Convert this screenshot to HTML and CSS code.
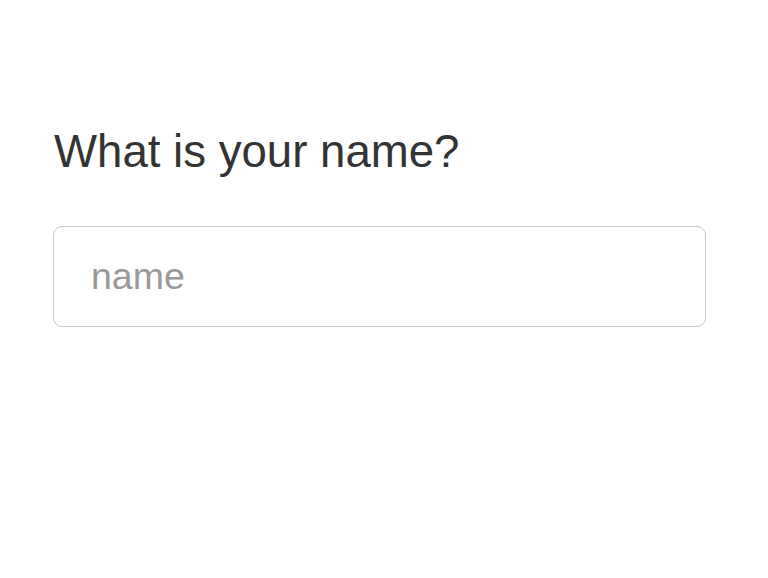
FILE: index.html
```html
<!DOCTYPE html>
<html lang="en">
<head>
<meta charset="utf-8">
<title>Name</title>
<link rel="stylesheet" href="styles.css">
</head>
<body>
<main class="page">
  <form class="question">
    <label class="question-label" for="name">What is your name?</label>
    <input class="question-input" id="name" type="text" placeholder="name">
  </form>
</main>
</body>
</html>
```
FILE: styles.css
```css
html, body {
  margin: 0;
  padding: 0;
  background: #ffffff;
}
body {
  font-family: "Liberation Sans", Arial, sans-serif;
  color: #333333;
}
.page {
  padding: 125px 62px 0 53px;
}
.question {
  display: flex;
  flex-direction: column;
  gap: 47px;
  margin: 0;
}
.question-label {
  display: block;
  font-size: 45.6px;
  line-height: 54px;
  padding-left: 1px;
}
.question-input {
  box-sizing: border-box;
  width: 653px;
  height: 101px;
  margin: 0;
  padding: 0 37px;
  border: 1px solid #c8c8c8;
  border-radius: 9px;
  font-family: "Liberation Sans", Arial, sans-serif;
  font-size: 37.5px;
  color: #333333;
  background: #ffffff;
  outline: none;
}
.question-input::placeholder {
  color: #999999;
  opacity: 1;
}
```
